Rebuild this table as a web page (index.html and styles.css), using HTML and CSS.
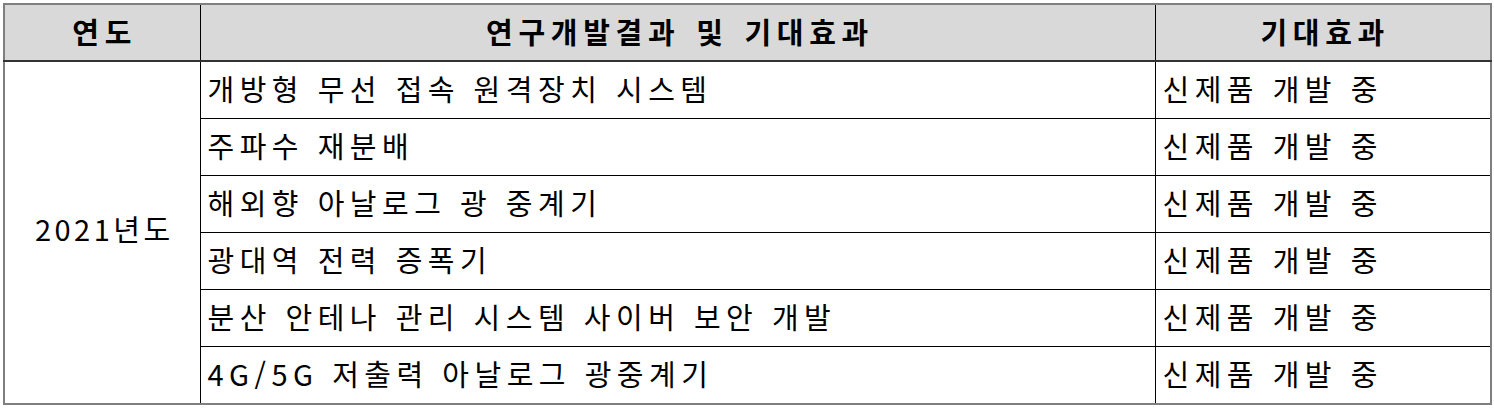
FILE: index.html
```html
<!DOCTYPE html>
<html lang="ko">
<head>
<meta charset="utf-8">
<link rel="stylesheet" href="styles.css">
</head>
<body>
<table class="grid">
  <colgroup>
    <col class="c-year">
    <col class="c-result">
    <col class="c-effect">
  </colgroup>
  <thead>
    <tr>
      <th>연도</th>
      <th>연구개발결과 및 기대효과</th>
      <th>기대효과</th>
    </tr>
  </thead>
  <tbody>
    <tr>
      <td class="year" rowspan="6">2021년도</td>
      <td>개방형 무선 접속 원격장치 시스템</td>
      <td>신제품 개발 중</td>
    </tr>
    <tr><td>주파수 재분배</td><td>신제품 개발 중</td></tr>
    <tr><td>해외향 아날로그 광 중계기</td><td>신제품 개발 중</td></tr>
    <tr><td>광대역 전력 증폭기</td><td>신제품 개발 중</td></tr>
    <tr><td>분산 안테나 관리 시스템 사이버 보안 개발</td><td>신제품 개발 중</td></tr>
    <tr><td>4G/5G 저출력 아날로그 광중계기</td><td>신제품 개발 중</td></tr>
  </tbody>
</table>
</body>
</html>
```
FILE: styles.css
```css
html, body {
  margin: 0;
  padding: 0;
  background: #ffffff;
}
body {
  padding: 3px 0 0 3px;
  font-family: "Noto Sans CJK KR", "Noto Sans", sans-serif;
  color: #000;
}
.grid {
  border-collapse: collapse;
  width: 1487px;
  table-layout: fixed;
  border: 2px solid #7f7f7f;
}
.c-year { width: 196px; }
.c-result { width: 955px; }
.c-effect { width: 336px; }
.grid th {
  background: #d9d9d9;
  height: 53px;
  font-size: 29px;
  font-weight: 700;
  letter-spacing: 5.7px;
  word-spacing: 2px;
  text-align: center;
  border-left: 1px solid #000;
  border-right: 1px solid #000;
  border-bottom: 2px solid #333;
  padding: 0 0 2px 5px;
  line-height: 1;
}
.grid td {
  height: 52px;
  font-size: 29px;
  font-weight: 400;
  letter-spacing: 5.5px;
  word-spacing: 0;
  text-align: left;
  padding: 0 0 4px 7px;
  border: 1px solid #000;
  line-height: 1;
  white-space: nowrap;
}
.grid td.year {
  text-align: center;
  padding: 0 0 8px 4px;
  letter-spacing: 3.5px;
}
```
